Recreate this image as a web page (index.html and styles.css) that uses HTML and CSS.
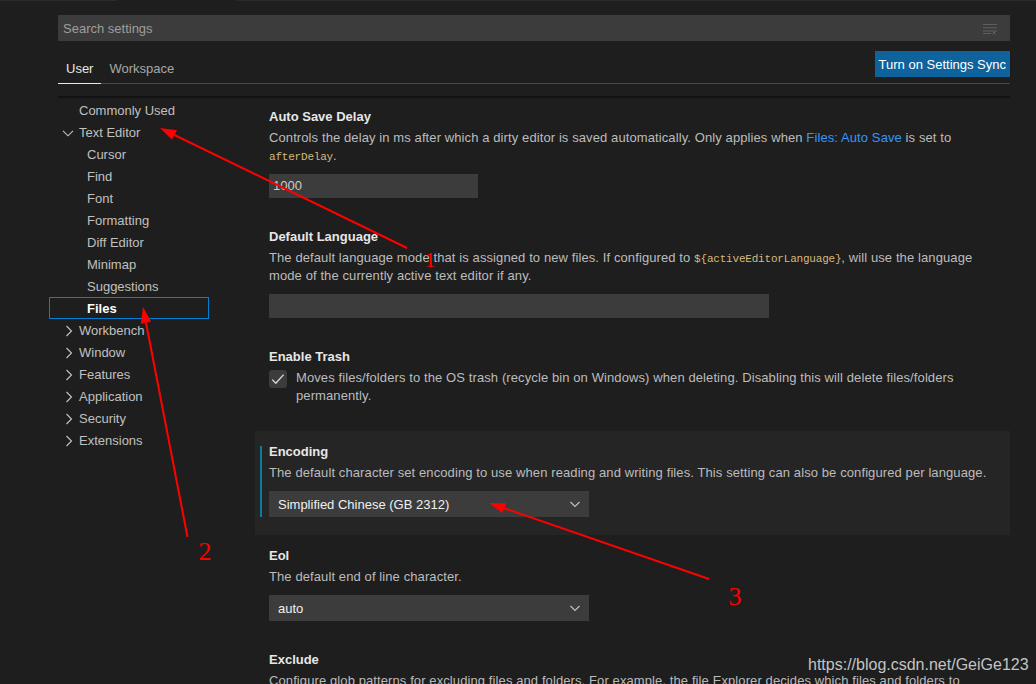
FILE: index.html
```html
<!DOCTYPE html>
<html>
<head>
<meta charset="utf-8">
<title>Settings</title>
<link rel="stylesheet" href="styles.css">
</head>
<body>
<div class="topstrip"><span class="ts-a"></span><span class="ts-b"></span><span class="ts-c"></span></div>
<div class="editor">
  <div class="search">
    <span class="placeholder">Search settings</span>
    <svg class="clear-icon" width="16" height="12" viewBox="0 0 16 12">
      <path d="M1 1.5H15M1 4.8H15M1 8H15M1 10.5H9" stroke="#5f5f5f" stroke-width="1" fill="none"/>
      <path d="M10.5 8.5L13.5 11.5M13.5 8.5L10.5 11.5" stroke="#5f5f5f" stroke-width="1" fill="none"/>
    </svg>
  </div>
  <div class="tabsrow">
    <div class="tabs">
      <div class="tab active">User</div>
      <div class="tab">Workspace</div>
    </div>
    <button class="sync">Turn on Settings Sync</button>
  </div>
  <div class="bodyarea">
    <div class="scroll-shadow"></div>
    <nav class="tree">
      <div class="row lvl0">Commonly Used</div>
      <div class="row chev"><svg class="chv" width="16" height="16" viewBox="0 0 16 16"><path d="M2 5.8L7 10.8L12 5.8" stroke="#c5c5c5" stroke-width="1.1" fill="none"/></svg><span>Text Editor</span></div>
      <div class="row lvl1">Cursor</div>
      <div class="row lvl1">Find</div>
      <div class="row lvl1">Font</div>
      <div class="row lvl1">Formatting</div>
      <div class="row lvl1">Diff Editor</div>
      <div class="row lvl1">Minimap</div>
      <div class="row lvl1">Suggestions</div>
      <div class="row lvl1 selected">Files</div>
      <div class="row chev"><svg class="chv" width="16" height="16" viewBox="0 0 16 16"><path d="M5.5 3L10.5 8L5.5 13" stroke="#c5c5c5" stroke-width="1.1" fill="none"/></svg><span>Workbench</span></div>
      <div class="row chev"><svg class="chv" width="16" height="16" viewBox="0 0 16 16"><path d="M5.5 3L10.5 8L5.5 13" stroke="#c5c5c5" stroke-width="1.1" fill="none"/></svg><span>Window</span></div>
      <div class="row chev"><svg class="chv" width="16" height="16" viewBox="0 0 16 16"><path d="M5.5 3L10.5 8L5.5 13" stroke="#c5c5c5" stroke-width="1.1" fill="none"/></svg><span>Features</span></div>
      <div class="row chev"><svg class="chv" width="16" height="16" viewBox="0 0 16 16"><path d="M5.5 3L10.5 8L5.5 13" stroke="#c5c5c5" stroke-width="1.1" fill="none"/></svg><span>Application</span></div>
      <div class="row chev"><svg class="chv" width="16" height="16" viewBox="0 0 16 16"><path d="M5.5 3L10.5 8L5.5 13" stroke="#c5c5c5" stroke-width="1.1" fill="none"/></svg><span>Security</span></div>
      <div class="row chev"><svg class="chv" width="16" height="16" viewBox="0 0 16 16"><path d="M5.5 3L10.5 8L5.5 13" stroke="#c5c5c5" stroke-width="1.1" fill="none"/></svg><span>Extensions</span></div>
    </nav>
    <main class="settings">
      <section class="item">
        <div class="title">Auto Save Delay</div>
        <div class="desc">Controls the delay in ms after which a dirty editor is saved automatically. Only applies when <span class="link">Files: Auto Save</span> is set to <code>afterDelay</code>.</div>
        <div class="input num">1000</div>
      </section>
      <section class="item">
        <div class="title">Default Language</div>
        <div class="desc">The default language mode that is assigned to new files. If configured to <code>${activeEditorLanguage}</code>, will use the language mode of the currently active text editor if any.</div>
        <div class="input wide"></div>
      </section>
      <section class="item bool">
        <div class="title">Enable Trash</div>
        <div class="boolrow">
          <span class="checkbox"><svg width="18" height="18" viewBox="0 0 18 18"><path d="M3.3 9.6L6.8 13.2L14.6 4.6" stroke="#dcdcdc" stroke-width="1.3" fill="none"/></svg></span>
          <div class="desc inline">Moves files/folders to the OS trash (recycle bin on Windows) when deleting. Disabling this will delete files/folders permanently.</div>
        </div>
      </section>
      <section class="item focused">
        <div class="title">Encoding</div>
        <div class="desc">The default character set encoding to use when reading and writing files. This setting can also be configured per language.</div>
        <div class="select"><span>Simplified Chinese (GB 2312)</span><svg width="16" height="16" viewBox="0 0 16 16"><path d="M3.5 6L8 10.5L12.5 6" stroke="#c5c5c5" stroke-width="1.1" fill="none"/></svg></div>
      </section>
      <section class="item">
        <div class="title">Eol</div>
        <div class="desc">The default end of line character.</div>
        <div class="select"><span>auto</span><svg width="16" height="16" viewBox="0 0 16 16"><path d="M3.5 6L8 10.5L12.5 6" stroke="#c5c5c5" stroke-width="1.1" fill="none"/></svg></div>
      </section>
      <section class="item">
        <div class="title">Exclude</div>
        <div class="desc">Configure glob patterns for excluding files and folders. For example, the file Explorer decides which files and folders to<br>show or hide based on this setting.</div>
      </section>
    </main>
  </div>
</div>
<div class="watermark">https://blog.csdn.net/GeiGe123</div>
<svg class="annot" width="1036" height="684" viewBox="0 0 1036 684">
  <g stroke="#ff0000" stroke-width="2" fill="none">
    <line x1="407" y1="248" x2="174.4" y2="135"/>
    <line x1="187.5" y1="537" x2="146" y2="322.7"/>
    <line x1="709" y1="579" x2="504.1" y2="508.2"/>
  </g>
  <g fill="#ff0000">
    <polygon points="160,128 177,130.3 172,139.7"/>
    <polygon points="143,307 151.2,321.8 140.9,323.8"/>
    <polygon points="489,503 506,503.3 502.4,513.1"/>
  </g>
  <g fill="#ff0000" font-family="'Liberation Serif', serif" text-anchor="middle">
    <text x="430" y="267" font-size="22">1</text>
    <text x="205" y="560" font-size="26">2</text>
    <text x="735" y="605" font-size="26">3</text>
  </g>
</svg>
</body>
</html>
```
FILE: styles.css
```css
html, body {
  margin: 0;
  padding: 0;
}
body {
  width: 1036px;
  height: 684px;
  overflow: hidden;
  background: #1e1e1e;
  font-family: "Liberation Sans", Arial, sans-serif;
  font-size: 13px;
  color: #cccccc;
  position: relative;
}
.topstrip {
  display: flex;
  height: 1px;
}
.ts-a { width: 117px; background: #2b2b2b; }
.ts-b { width: 120px; background: #1e1e1e; }
.ts-c { flex: 1; background: #2b2b2b; }

.editor {
  padding: 0 26px 0 58px;
}
.search {
  margin-top: 14px;
  height: 26px;
  background: #3c3c3c;
  display: flex;
  align-items: center;
  justify-content: space-between;
  padding: 0 12px 0 5px;
}
.placeholder {
  color: #9e9e9e;
  font-size: 13px;
}
.clear-icon {
  display: block;
  margin-top: 2px;
}
.tabsrow {
  margin-top: 10px;
  height: 32px;
  border-bottom: 1px solid #474747;
  display: flex;
  justify-content: space-between;
  align-items: flex-start;
}
.tabs {
  display: flex;
  align-self: flex-end;
}
.tab {
  height: 32px;
  line-height: 35px;
  padding: 0 8px;
  color: #a8a8a8;
  margin-bottom: -1px;
  border-bottom: 1px solid transparent;
}
.tab.active {
  color: #e7e7e7;
  border-bottom-color: #e7e7e7;
}
.sync {
  height: 26px;
  border: none;
  background: #0e639c;
  color: #ffffff;
  font-family: "Liberation Sans", Arial, sans-serif;
  font-size: 13px;
  padding: 0 4px;
  margin: 0;
}
.bodyarea {
  position: relative;
  margin-top: 12px;
  display: flex;
  margin-left: -9px;
}
.scroll-shadow {
  position: absolute;
  left: 9px;
  right: 0;
  top: 0;
  height: 3px;
  background: linear-gradient(#101010, #161616 60%, #1b1b1b);
}
.tree {
  width: 160px;
  padding-top: 3px;
  flex: none;
}
.row {
  height: 22px;
  line-height: 22px;
  padding-top: 1px;
  box-sizing: border-box;
  color: #c0c0c0;
  display: flex;
  align-items: center;
  white-space: nowrap;
}
.row.lvl0 { padding-left: 30px; }
.row.lvl1 { padding-left: 38px; }
.row.chev { padding-left: 12px; }
.chv { flex: none; margin-right: 2px; }
.row.selected {
  border: 1px solid #007fd4;
  padding-left: 37px;
  color: #ffffff;
  font-weight: bold;
}
.settings {
  margin-left: 46px;
  flex: 1;
}
.item {
  position: relative;
  padding: 12px 14px 18px 14px;
}
.item.bool {
  padding-bottom: 26px;
}
.item.focused {
  background: #252526;
}
.item.focused::before {
  content: "";
  position: absolute;
  left: 5px;
  top: 15px;
  bottom: 18px;
  width: 2px;
  background: #0c7d9d;
}
.title {
  font-weight: bold;
  line-height: 18px;
  color: #e7e7e7;
}
.desc {
  margin-top: 3px;
  line-height: 18px;
  color: #bcbcbc;
  letter-spacing: 0.1px;
}
.desc.inline {
  margin-top: 0;
  flex: 1;
}
code {
  font-family: "Liberation Mono", monospace;
  font-size: 11px;
  line-height: 1;
  letter-spacing: -0.2px;
  color: #d7ba7d;
}
.link {
  color: #3794ff;
}
.input {
  margin-top: 9px;
  height: 24px;
  line-height: 24px;
  background: #3c3c3c;
  color: #cccccc;
  padding: 0 4px;
  box-sizing: border-box;
}
.input.num { width: 209px; }
.input.wide { width: 500px; }
.boolrow {
  margin-top: 3px;
  display: flex;
  align-items: flex-start;
}
.checkbox {
  flex: none;
  width: 18px;
  height: 18px;
  margin-top: 1px;
  margin-right: 9px;
  background: #3c3c3c;
  border-radius: 3px;
}
.checkbox svg { display: block; }
.select {
  margin-top: 9px;
  width: 320px;
  height: 26px;
  box-sizing: border-box;
  background: #3c3c3c;
  color: #f0f0f0;
  display: flex;
  align-items: center;
  justify-content: space-between;
  padding: 0 6px 0 9px;
}
.select svg { display: block; }
.watermark {
  position: absolute;
  left: 808px;
  top: 656px;
  font-family: "Liberation Sans", Arial, sans-serif;
  font-size: 16px;
  line-height: 18px;
  color: #c4c4c4;
  white-space: nowrap;
}
.annot {
  position: absolute;
  left: 0;
  top: 0;
  pointer-events: none;
}
```
